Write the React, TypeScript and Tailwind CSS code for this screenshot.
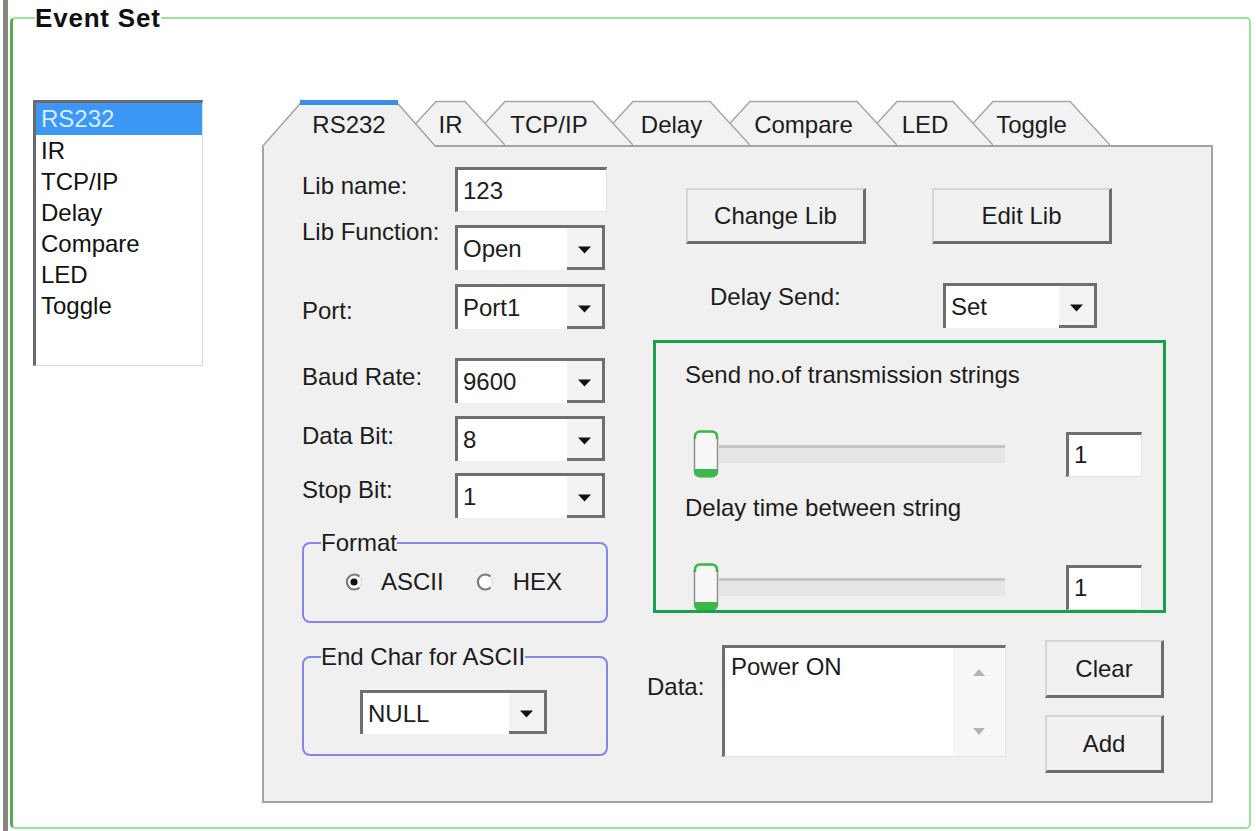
import React from 'react'

const Caret = () => (
  <svg width="13" height="8" viewBox="0 0 13 8">
    <path d="M0 0.5h13L6.5 7.5z" fill="#111" />
  </svg>
)

const Combo = ({ value, className }: { value: string; className: string }) => (
  <div className={`flex bg-white border-t-[3px] border-l-[3px] border-[#6f6f6f] ${className}`}>
    <span className="flex-1 pl-[5px] flex items-center">{value}</span>
    <span className="w-[38px] flex items-center justify-center pt-[4px] bg-[#f3f3f3] border-r-[3px] border-b-[3px] border-[#6f6f6f]">
      <Caret />
    </span>
  </div>
)

const TextBox = ({ value, className }: { value: string; className: string }) => (
  <div
    className={`flex items-center pl-[5px] bg-white border-t-[3px] border-l-[3px] border-[#6f6f6f] border-r border-b border-r-[#e4e4e4] border-b-[#e4e4e4] ${className}`}
  >
    {value}
  </div>
)

const WinButton = ({ label, className }: { label: string; className: string }) => (
  <div
    className={`flex items-center justify-center bg-[#f1f1f1] border-t-2 border-l-2 border-t-[#d6d6d6] border-l-[#d6d6d6] border-r-[3px] border-b-[3px] border-r-[#6c6c6c] border-b-[#6c6c6c] ${className}`}
  >
    {label}
  </div>
)

const Thumb = () => (
  <svg width="26" height="48" viewBox="0 0 26 48" className="shrink-0">
    <rect x="1.5" y="1.5" width="23" height="45" rx="5" fill="#f8f8f8" stroke="#8f8f8f" strokeWidth="1.5" />
    <path d="M2 9 V6.5 A5 5 0 0 1 7 1.5 H19 A5 5 0 0 1 24 6.5 V9" fill="none" stroke="#3cb84a" strokeWidth="2.5" />
    <path d="M2 40 V41.5 A5 5 0 0 0 7 46.5 H19 A5 5 0 0 0 24 41.5 V40 Z" fill="#3cb84a" stroke="#3cb84a" strokeWidth="2" />
  </svg>
)

const Slider = () => (
  <div className="flex items-center ml-[37px]">
    <Thumb />
    <div className="w-[286px] h-[18px] bg-[#e6e6e6] border-t-[3px] border-[#c6c6c6]" />
    <TextBox value="1" className="ml-[61px] w-[76px] h-[45px]" />
  </div>
)

const Radio = ({ checked }: { checked: boolean }) => (
  <svg width="20" height="20" viewBox="0 0 20 20" className="shrink-0">
    <circle cx="10" cy="10" r="7.5" fill="#fff" stroke="#e0e0e0" strokeWidth="1.5" />
    <path d="M15.5 4.5 A7.5 7.5 0 1 0 15.5 15.5" fill="none" stroke="#7c7c7c" strokeWidth="2.2" />
    {checked && <circle cx="10" cy="10" r="3.6" fill="#111" />}
  </svg>
)

const tabs = [
  { label: 'RS232', w: 174, cls: 'w-[174px] z-[7]' },
  { label: 'IR', w: 109, cls: 'w-[109px] z-[6] -ml-[40px]' },
  { label: 'TCP/IP', w: 168, cls: 'w-[168px] z-[5] -ml-[40px]' },
  { label: 'Delay', w: 157, cls: 'w-[157px] z-[4] -ml-[40px]' },
  { label: 'Compare', w: 187, cls: 'w-[187px] z-[3] -ml-[40px]' },
  { label: 'LED', w: 136, cls: 'w-[136px] z-[2] -ml-[40px]' },
  { label: 'Toggle', w: 157, cls: 'w-[157px] z-[1] -ml-[40px]' },
]

const listItems = ['RS232', 'IR', 'TCP/IP', 'Delay', 'Compare', 'LED', 'Toggle']

const formRows = [
  { label: 'Lib name:', value: '123', input: true, row: '', labelCls: 'mt-[5px]', fieldCls: '' },
  { label: 'Lib Function:', value: 'Open', input: false, row: 'mt-[6px]', labelCls: '', fieldCls: 'mt-[7px]' },
  { label: 'Port:', value: 'Port1', input: false, row: 'mt-[14px]', labelCls: 'mt-[13px]', fieldCls: '' },
  { label: 'Baud Rate:', value: '9600', input: false, row: 'mt-[29px]', labelCls: 'mt-[5px]', fieldCls: '' },
  { label: 'Data Bit:', value: '8', input: false, row: 'mt-[13px]', labelCls: 'mt-[6px]', fieldCls: '' },
  { label: 'Stop Bit:', value: '1', input: false, row: 'mt-[12px]', labelCls: 'mt-[3px]', fieldCls: '' },
]

export default function App() {
  return (
    <div className="w-[1256px] h-[831px] bg-white flex overflow-hidden font-['Liberation_Sans',Arial,sans-serif] text-[24px] leading-[28px] text-[#1c1c1c]">
      <div className="w-[10px] h-full pl-[3px]">
        <div className="w-[5px] h-full bg-[#86867e]" />
      </div>

      <fieldset className="mt-[4px] w-[1241px] h-[825px] border-2 border-[#9be29b] border-l-[3px] border-l-[#52ae52] rounded-[5px] p-0 m-0 min-w-0">
        <legend className="ml-[22px] text-[26px] leading-[28px] font-bold tracking-[0.8px] text-[#111]">Event Set</legend>

        <div className="flex items-start mt-[68px]">
          {/* type list */}
          <div className="ml-[20px] w-[170px] h-[266px] bg-white border-t-[3px] border-l-[3px] border-[#6a6a6a] border-r border-b border-r-[#d9d9d9] border-b-[#d9d9d9]">
            {listItems.map((item, i) =>
              i === 0 ? (
                <div key={item} className="h-[32px] pl-[5px] flex items-center bg-[#3b98f5] text-[#d8ecff]">
                  {item}
                </div>
              ) : (
                <div key={item} className="h-[31px] pl-[5px] flex items-center text-[#111]">
                  {item}
                </div>
              ),
            )}
          </div>

          {/* tab control */}
          <div className="ml-[59px] w-[951px]">
            <div className="relative z-10 flex items-start h-[45px]">
              {tabs.map((t, i) => {
                const sel = i === 0
                const h = sel ? 47 : 45
                return (
                  <div key={t.label} className={`relative flex items-center justify-center pt-[5px] ${sel ? 'h-[47px] pb-[2px]' : 'h-[45px]'} ${t.cls}`}>
                    <svg className="absolute inset-0" width={t.w} height={h} viewBox={`0 0 ${t.w} ${h}`}>
                      <polygon points={`0,${h} 40,1.5 ${t.w - 40},1.5 ${t.w},${h}`} fill={sel ? '#f0f0f0' : '#f2f2f2'} />
                      <polyline points={`0,${h} 40,1.5 ${t.w - 40},1.5 ${t.w},${h}`} fill="none" stroke="#a6a6a6" strokeWidth="1.5" />
                      {sel && <line x1="38" y1="2.5" x2={t.w - 38} y2="2.5" stroke="#3a8ee6" strokeWidth="5" />}
                    </svg>
                    <span className="relative">{t.label}</span>
                  </div>
                )
              })}
            </div>

            <div className="h-[658px] border-2 border-[#a4a4a4] bg-[#f0f0f0] flex items-start">
              {/* left column */}
              <div className="ml-[38px] mt-[20px] w-[306px] flex flex-col">
                {formRows.map((r) => (
                  <div key={r.label} className={`flex items-start ${r.row}`}>
                    <span className={`w-[153px] whitespace-nowrap ${r.labelCls}`}>{r.label}</span>
                    {r.input ? (
                      <TextBox value={r.value} className={`w-[152px] h-[45px] ${r.fieldCls}`} />
                    ) : (
                      <Combo value={r.value} className={`w-[150px] h-[45px] ${r.fieldCls}`} />
                    )}
                  </div>
                ))}

                <fieldset className="mt-[12px] h-[93px] border-2 border-[#8587e6] rounded-[8px] p-0 m-0 min-w-0">
                  <legend className="ml-[17px] leading-[26px]">Format</legend>
                  <div className="flex items-center mt-[12px] h-[28px]">
                    <span className="ml-[40px] flex"><Radio checked /></span>
                    <span className="ml-[17px]">ASCII</span>
                    <span className="ml-[31px] flex"><Radio checked={false} /></span>
                    <span className="ml-[18px]">HEX</span>
                  </div>
                </fieldset>

                <fieldset className="mt-[21px] h-[112px] border-2 border-[#8587e6] rounded-[8px] p-0 m-0 min-w-0">
                  <legend className="ml-[17px] leading-[26px]">End Char for ASCII</legend>
                  <Combo value="NULL" className="ml-[56px] mt-[20px] w-[187px] h-[44px]" />
                </fieldset>
              </div>

              {/* right column */}
              <div className="ml-[39px] mt-[41px] w-[519px] flex flex-col">
                <div className="flex ml-[39px]">
                  <WinButton label="Change Lib" className="w-[180px] h-[56px]" />
                  <WinButton label="Edit Lib" className="ml-[66px] w-[180px] h-[56px]" />
                </div>

                <div className="flex items-start mt-[39px] ml-[63px]">
                  <span className="w-[233px]">Delay Send:</span>
                  <Combo value="Set" className="w-[154px] h-[45px]" />
                </div>

                <div className="mt-[12px] ml-[6px] w-[513px] h-[273px] border-[3px] border-[#1a9f4b] overflow-hidden">
                  <div className="pl-[29px] mt-[18px]">Send no.of transmission strings</div>
                  <div className="mt-[41px]">
                    <Slider />
                  </div>
                  <div className="pl-[29px] mt-[16px]">Delay time between string</div>
                  <div className="mt-[41px]">
                    <Slider />
                  </div>
                </div>

                <div className="flex items-start mt-[27px]">
                  <span className="w-[75px] mt-[33px]">Data:</span>
                  <div className="mt-[5px] w-[284px] h-[112px] flex bg-white border-t-[3px] border-l-[3px] border-[#6f6f6f] border-r border-b border-r-[#e4e4e4] border-b-[#e4e4e4]">
                    <span className="flex-1 pl-[6px] pt-[5px]">Power ON</span>
                    <div className="w-[52px] bg-[#f7f7f7] flex flex-col items-center justify-between py-[21px]">
                      <svg width="12" height="7" viewBox="0 0 12 7"><path d="M0 7h12L6 0z" fill="#b4b4b4" /></svg>
                      <svg width="12" height="7" viewBox="0 0 12 7"><path d="M0 0h12L6 7z" fill="#b4b4b4" /></svg>
                    </div>
                  </div>
                  <div className="ml-[39px] flex flex-col">
                    <WinButton label="Clear" className="w-[119px] h-[58px]" />
                    <WinButton label="Add" className="mt-[17px] w-[119px] h-[58px]" />
                  </div>
                </div>
              </div>
            </div>
          </div>
        </div>
      </fieldset>
    </div>
  )
}
